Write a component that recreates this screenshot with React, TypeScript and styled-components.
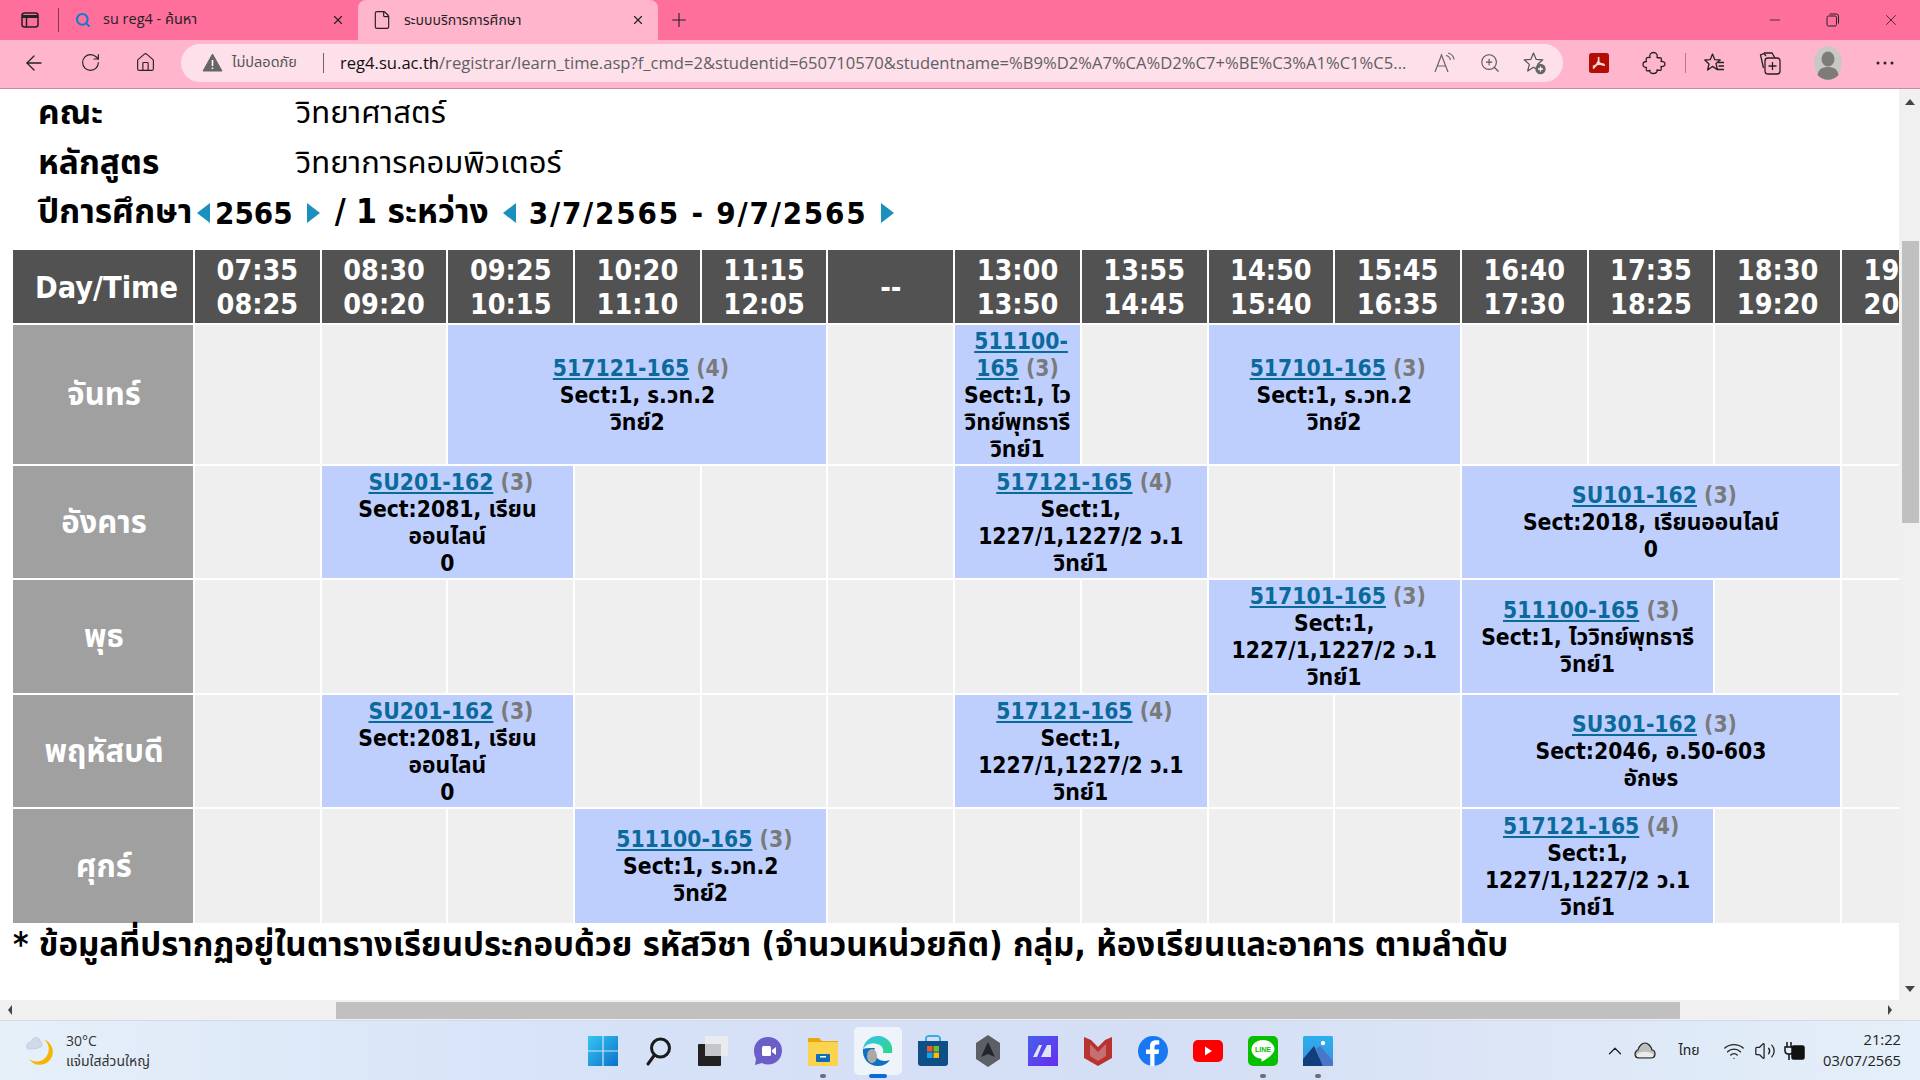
import React from "react";
import styled, { createGlobalStyle } from "styled-components";
import { ArrowLeft, RotateCw, Home, Search, X, Plus, File, Minus, ZoomIn, ChevronUp, Wifi, Volume2 } from "lucide-react";

const Global = createGlobalStyle`
  html, body { margin: 0; padding: 0; width: 1920px; height: 1080px; overflow: hidden; background: #fff; }
  * { box-sizing: border-box; }
`;
const PAGE_FONT = `"DejaVu Sans Condensed", "DejaVu Sans", "Noto Sans Thai", "Noto Sans", sans-serif`;
const UI_FONT = `"Open Sans", "Noto Sans", "Noto Sans Thai", sans-serif`;

const Win = styled.div`display:flex;flex-direction:column;width:1920px;height:1080px;overflow:hidden;`;
const TabStrip = styled.div`display:flex;align-items:flex-end;height:40px;background:#ff6f9c;color:#222;font-family:${UI_FONT};`;
const SideBtn = styled.div`display:flex;align-items:center;justify-content:center;width:59px;height:40px;position:relative;
  &::after{content:"";position:absolute;right:0;top:8px;height:24px;width:1px;background:#7d3a50;}`;
const Tab = styled.div<{ $active?: boolean }>`display:flex;align-items:center;height:40px;width:${p => (p.$active ? "300px" : "299px")};
  background:${p => (p.$active ? "#ffb6cc" : "transparent")};border-radius:${p => (p.$active ? "8px 8px 0 0" : "0")};padding:0 13px 0 ${p => (p.$active ? "14px" : "16px")};
  font-size:${p => (p.$active ? "14px" : "14.5px")};gap:12px;`;
const TabTitle = styled.span`flex:1;white-space:nowrap;overflow:hidden;`;
const NewTab = styled.div`display:flex;align-items:center;justify-content:center;width:42px;height:40px;`;
const Spacer = styled.div`flex:1;`;
const WinCtl = styled.div`display:flex;align-items:center;justify-content:center;width:58px;height:40px;`;

const Toolbar = styled.div`display:flex;align-items:center;height:49px;background:#ffb6cc;border-bottom:1px solid #c98aa0;padding:0 0 3px 0;`;
const NavBtn = styled.div<{ $w: number }>`display:flex;align-items:center;justify-content:center;width:${p => p.$w}px;height:38px;flex:none;`;
const AddressBar = styled.div`display:flex;align-items:center;width:1382px;height:38px;background:#fde0ea;border-radius:19px;font-family:${UI_FONT};flex:none;`;
const WarnWrap = styled.div`display:flex;margin-left:21px;width:30px;flex:none;`;
const Insecure = styled.span`font-size:14.5px;color:#555;width:76px;flex:none;white-space:nowrap;`;
const Sep = styled.div`width:1px;height:20px;background:#666;margin:0 16px 0 15px;flex:none;`;
const Url = styled.div`width:1082px;flex:none;font-size:16.6px;color:#5f5f5f;white-space:nowrap;overflow:hidden;
  b{font-weight:400;color:#111;}`;
const AddrIcons = styled.div`display:flex;align-items:center;`;
const AddrIcon = styled.div`width:45px;display:flex;justify-content:center;`;
const TbSep = styled.div`width:1px;height:20px;background:#b3788c;flex:none;margin-left:12px;`;

const PageRow = styled.div`display:flex;flex:1;min-height:0;`;
const Page = styled.div`width:1899px;overflow:hidden;background:#fff;color:#000;font-family:${PAGE_FONT};`;
const VScroll = styled.div`width:21px;background:#f0f0f0;display:flex;flex-direction:column;align-items:center;position:relative;`;
const VThumb = styled.div`width:17px;height:282px;background:#c0c0c0;margin-top:152px;margin-left:2px;`;
const Arrow = styled.div<{ $dir: "up" | "down" | "left" | "right" }>`width:0;height:0;position:absolute;
  ${p => p.$dir === "up" && "top:10px;left:6px;border:5px solid transparent;border-top:0;border-bottom:6px solid #444;"}
  ${p => p.$dir === "down" && "bottom:8px;left:6px;border:5px solid transparent;border-bottom:0;border-top:6px solid #444;"}
  ${p => p.$dir === "left" && "left:8px;top:5px;border:5px solid transparent;border-left:0;border-right:4px solid #444;"}
  ${p => p.$dir === "right" && "right:28px;top:5px;border:5px solid transparent;border-right:0;border-left:4px solid #444;"}
`;
const HScroll = styled.div`height:20px;background:#f0f0f0;position:relative;padding:2px 0 1px 336px;flex:none;`;
const HThumb = styled.div`width:1344px;height:17px;background:#c0c0c0;`;

const InfoRow = styled.div`display:flex;align-items:center;height:49.5px;padding-left:38px;white-space:nowrap;`;
const InfoLabel = styled.div`width:258px;font-weight:700;font-size:33.5px;`;
const InfoValue = styled.div`font-weight:400;font-size:31px;`;
const YearNum = styled.span`font-weight:700;font-size:31px;`;
const YearMid = styled.span`font-weight:700;font-size:33.5px;margin-left:10px;`;
const YearDates = styled.span`font-weight:700;font-size:31px;letter-spacing:1.8px;margin-left:8px;`;
const YearLabel = styled.span`font-weight:700;font-size:33.5px;width:159px;flex:none;`;
const Tri = styled.i<{ $dir: "l" | "r"; $ml: number }>`display:block;width:0;height:0;flex:none;margin-left:${p => p.$ml}px;margin-right:5px;
  border-top:10px solid transparent;border-bottom:10px solid transparent;
  ${p => (p.$dir === "l" ? "border-right:13px solid #1b90bf;" : "border-left:13px solid #1b90bf;")}`;

const Table = styled.table`margin:10px 0 0 11px;border-collapse:separate;border-spacing:2px;table-layout:fixed;width:1957.8px;`;
const HeadCell = styled.th`background:#525252;color:#fff;font-size:28.5px;font-weight:700;line-height:34px;height:73px;padding:3px 0 0;text-align:center;white-space:pre;`;
const DayHead = styled(HeadCell)`font-size:30.4px;padding-left:7px;`;
const DayCell = styled.td`background:#a0a0a0;color:#fff;font-size:31px;font-weight:700;text-align:center;padding:3px 0 0 2px;`;
const Empty = styled.td`background:#efefef;padding:0;`;
const Course = styled.td`background:#bfcffd;text-align:center;font-size:22.7px;font-weight:700;line-height:27px;padding:3px 0 1px;white-space:pre;`;
const CourseLink = styled.a`color:#0a6a9b;text-decoration:underline;`;
const Credit = styled.span`color:#7a7a7a;`;
const Note = styled.div`font-size:33px;font-weight:700;height:40px;line-height:40px;padding:0 0 0 13px;white-space:nowrap;`;

const Taskbar = styled.div`display:grid;grid-template-columns:1fr 770px 1fr;align-items:center;height:60px;flex:none;
  background:linear-gradient(90deg,#e6f0f9 0%,#d6e2f8 30%,#d4def5 60%,#e4eff9 100%);border-top:1px solid #d3dbe6;font-family:${UI_FONT};color:#222;`;
const Weather = styled.div`display:flex;align-items:center;padding-left:26px;gap:10px;`;
const WeatherText = styled.div`display:flex;flex-direction:column;font-size:14px;line-height:20px;color:#333;`;
const TaskIcons = styled.div`display:flex;`;
const TaskItem = styled.div<{ $active?: boolean }>`width:55px;height:58px;display:flex;align-items:center;justify-content:center;position:relative;
  &>div{width:48px;height:48px;border-radius:5px;display:flex;align-items:center;justify-content:center;background:${p => (p.$active ? "#eff4fb" : "transparent")};}`;
const RunDot = styled.span<{ $active?: boolean }>`position:absolute;bottom:2px;left:50%;transform:translateX(-50%);height:4px;border-radius:2px;
  width:${p => (p.$active ? "18px" : "6px")};background:${p => (p.$active ? "#0a6cd6" : "#6b7078")};`;
const Tray = styled.div`display:flex;align-items:center;justify-content:flex-end;padding-right:19px;`;
const TrayItem = styled.div<{ $w: number }>`width:${p => p.$w}px;display:flex;justify-content:center;font-size:14px;flex:none;`;
const Clock = styled.div`text-align:right;font-size:14.7px;line-height:21px;margin:-2px 0 0 13px;`;

type Cell = { span?: number; code?: string; cont?: string; cr?: number; text?: string };
const e = (n: number): Cell[] => Array.from({ length: n }, () => ({}));
const hours = ["07:35\n08:25","08:30\n09:20","09:25\n10:15","10:20\n11:10","11:15\n12:05","--","13:00\n13:50","13:55\n14:45","14:50\n15:40","15:45\n16:35","16:40\n17:30","17:35\n18:25","18:30\n19:20","19:25\n20:15"];
const rv = "Sect:1,\n1227/1,1227/2 ว.1\nวิทย์1";
const su201 = "Sect:2081, เรียน\nออนไลน์\n0";
const rows: { day: string; h: number; cells: Cell[] }[] = [
  { day: "จันทร์", h: 139, cells: [...e(2), { span: 3, code: "517121-165", cr: 4, text: "Sect:1, ร.วท.2\nวิทย์2" }, ...e(1), { code: "511100-", cont: "165", cr: 3, text: "Sect:1, ไว\nวิทย์พุทธารี\nวิทย์1" }, ...e(1), { span: 2, code: "517101-165", cr: 3, text: "Sect:1, ร.วท.2\nวิทย์2" }, ...e(4)] },
  { day: "อังคาร", h: 112, cells: [...e(1), { span: 2, code: "SU201-162", cr: 3, text: su201 }, ...e(3), { span: 2, code: "517121-165", cr: 4, text: rv }, ...e(2), { span: 3, code: "SU101-162", cr: 3, text: "Sect:2018, เรียนออนไลน์\n0" }, ...e(1)] },
  { day: "พุธ", h: 113, cells: [...e(8), { span: 2, code: "517101-165", cr: 3, text: rv }, { span: 2, code: "511100-165", cr: 3, text: "Sect:1, ไววิทย์พุทธารี\nวิทย์1" }, ...e(2)] },
  { day: "พฤหัสบดี", h: 112, cells: [...e(1), { span: 2, code: "SU201-162", cr: 3, text: su201 }, ...e(3), { span: 2, code: "517121-165", cr: 4, text: rv }, ...e(2), { span: 3, code: "SU301-162", cr: 3, text: "Sect:2046, อ.50-603\nอักษร" }, ...e(1)] },
  { day: "ศุกร์", h: 114, cells: [...e(3), { span: 2, code: "511100-165", cr: 3, text: "Sect:1, ร.วท.2\nวิทย์2" }, ...e(5), { span: 2, code: "517121-165", cr: 4, text: rv }, ...e(2)] },
];

const SidebarIcon = () => (<svg width="20" height="20" viewBox="0 0 20 20" fill="none" stroke="#222" strokeWidth="1.5"><rect x="2" y="3" width="16" height="14" rx="2.5"/><path d="M2 6.500h16" strokeWidth="3"/><path d="M6.500 6v11"/></svg>);
const RestoreIcon = () => (<svg width="14" height="14" viewBox="0 0 14 14" fill="none" stroke="#222" strokeWidth="1"><rect x="1" y="3" width="9.500" height="10" rx="1.500"/><path d="M3.500 1h7a2 2 0 0 1 2 2v7.500"/></svg>);
const Warn = () => (<svg width="21" height="19" viewBox="0 0 21 19"><path d="M10.500 1 20 18H1z" fill="#666" stroke="#666" strokeLinejoin="round"/><path d="M10.500 7v6M10.500 14.500v1.500" stroke="#fff" strokeWidth="1.600"/></svg>);
const ReadAloud = () => (<svg width="24" height="22" viewBox="0 0 24 22" fill="none" stroke="#666" strokeWidth="1.200"><path d="M2 20 8.500 3 15 20M4.500 14h8"/><path d="M13 3.500c2.500.5 4 2 4.500 4.500M15 1c3.500.8 5.500 3 6 6.500"/></svg>);
const FavAdd = () => (<svg width="24" height="24" viewBox="0 0 24 24"><path d="M10.500 2l2.600 6.300 6.700.5-5.100 4.400 1.600 6.500-5.800-3.500L4.700 20l1.600-6.600L1.200 8.800l6.700-.5z" fill="none" stroke="#555" strokeWidth="1.200" strokeLinejoin="round"/><circle cx="17.500" cy="18" r="5.200" fill="#666"/><path d="M17.500 15.500v5M15 18h5" stroke="#fff" strokeWidth="1.300"/></svg>);
const Pdf = () => (<svg width="20" height="20" viewBox="0 0 20 20"><rect width="20" height="20" rx="2.500" fill="#b10d02"/><path d="M9.500 4c.8 3-1 7.500-5.500 11.500M9.500 8.500c1 2 3 3.500 6.500 3.700M4 13.500c3.500-2 8-3 11-2.200" fill="none" stroke="#f6d8d4" strokeWidth="1.700"/></svg>);
const PuzzleIcon = () => (<svg width="24" height="24" viewBox="0 0 24 24" fill="none" stroke="#222" strokeWidth="1.300" strokeLinejoin="round"><path d="M8 6.500c-1-3 1-5 3.500-5s4.500 2 3.500 5c2 .5 3.500 0 4 .5s.5 2 0 3.500c2.500-.5 4 1 4 2.500s-1.500 3-4 2.500c.5 2 .5 3 0 3.500s-2 .5-4 0c.5 2-1 3.500-3.500 3.500S7.500 21.500 8 19.500c-2 .5-3 .5-3.500 0s-.5-1.500 0-3c-2.500 0-3.500-1.500-3.500-3s1-3 3.500-3c-.5-1.500-.5-3 0-3.500S6 6 8 6.500z"/></svg>);
const Favs = () => (<svg width="24" height="24" viewBox="0 0 24 24" fill="none" stroke="#222" strokeWidth="1.300" strokeLinejoin="round"><path d="M9.500 3l2.300 5.700 5.400.3-4.200 3.600 1.400 6-4.900-3.200L4.600 19l1.400-6-4.200-4 5.400-.3z"/><path d="M15 11.500h6M15.500 15h5.500M14.500 18.500h6.500"/></svg>);
const Collections = () => (<svg width="24" height="26" viewBox="0 0 24 26" fill="none" stroke="#222" strokeWidth="1.300"><path d="M8 6 6 3.500 2.500 5l3 13"/><rect x="7" y="8" width="15" height="16" rx="3"/><path d="M14.500 12v8M10.500 16h8M6 3h8l3 5"/></svg>);
const Avatar = () => (<svg width="28" height="34" viewBox="0 0 28 34"><ellipse cx="14" cy="17" rx="14" ry="17" fill="#c9c8c4"/><ellipse cx="14" cy="13" rx="6.500" ry="7.500" fill="#7d7c79"/><path d="M3.500 29c1-6 5-8 10.500-8s9.500 2 10.500 8a14 14 0 0 1-21 0z" fill="#7d7c79"/></svg>);
const More = () => (<svg width="18" height="4" viewBox="0 0 18 4" fill="#222"><circle cx="2" cy="2" r="1.500"/><circle cx="9" cy="2" r="1.500"/><circle cx="16" cy="2" r="1.500"/></svg>);

const Moon = () => (<svg width="30" height="30" viewBox="0 0 30 30"><path d="M18 3.500A13 13 0 1 1 3 23 A 12 12 0 0 0 18 3.500z" fill="#f8b500"/><path d="M3 13c-2 0-3-2-2-4 0-2 2-3 4-2.500C6 3 8 1.500 10 1.500c2.500 0 4 2 4.500 4.500 1.500.5 2 2 1.500 4-1 2-8 3-13 3z" fill="#cfd9e8" stroke="#b4c1d6" strokeWidth=".6"/></svg>);
const WinLogo = () => (<svg width="30" height="30" viewBox="0 0 30 30"><defs><linearGradient id="wl" x1="0" y1="0" x2="1" y2="1"><stop offset="0" stopColor="#35c6f4"/><stop offset="1" stopColor="#0a72c8"/></linearGradient></defs><path d="M0 0h14.400v14.400H0zM15.600 0H30v14.400H15.600zM0 15.600h14.400V30H0zM15.600 15.600H30V30H15.600z" fill="url(#wl)"/></svg>);
const SearchTb = () => (<svg width="30" height="30" viewBox="0 0 30 30" fill="none" stroke="#1b1b1b" strokeWidth="3"><circle cx="17.500" cy="12" r="9"/><path d="M11.500 19 5 28" strokeLinecap="round"/></svg>);
const TaskView = () => (<svg width="30" height="30" viewBox="0 0 30 30"><rect x="7" y="0" width="23" height="20" rx="1" fill="#e9ebee" /><rect x="0" y="8" width="23" height="22" rx="1" fill="#222"/><rect x="7" y="8" width="16" height="12" fill="#c4c6ca"/></svg>);
const Chat = () => (<svg width="30" height="30" viewBox="0 0 30 30"><path d="M15 1C7 1 1 7 1 15c0 3 1 6 2 8l-1 6 7-2c2 1 4 1.500 6 1.500 8 0 14-6 14-14S23 1 15 1z" fill="#6b5fc7"/><rect x="9" y="10" width="9" height="10" rx="1.500" fill="#fff"/><path d="M19 14l4-3v8l-4-3z" fill="#fff"/></svg>);
const Explorer = () => (<svg width="30" height="30" viewBox="0 0 30 30"><path d="M0 2h11l3 3h16v25H0z" fill="#e9a90e"/><rect y="6" width="30" height="24" fill="#fcd34f"/><rect x="8" y="18" width="14" height="8" rx="1" fill="#0f6cbd"/><rect x="12" y="20" width="6" height="1.500" fill="#fff"/></svg>);
const Edge = () => (<svg width="32" height="32" viewBox="0 0 32 32"><defs><linearGradient id="eg" x1="0" y1="0" x2="1" y2="1"><stop offset="0" stopColor="#35c1f1"/><stop offset="1" stopColor="#2bd97f"/></linearGradient></defs><path d="M16 1C8 1 2 7 1 14c3-5 9-7 14-5 5 1 7 5 6 9h9c2-9-5-17-14-17z" fill="url(#eg)"/><path d="M1 14c-1 9 5 17 15 17 5 0 9-2 12-6-5 2-10 1-13-2-4-3-4-7-2-10-5 0-10 0-12 1z" fill="#1170c2"/><ellipse cx="10" cy="21" rx="5" ry="7" fill="#a9a9a5"/></svg>);
const Store = () => (<svg width="30" height="32" viewBox="0 0 30 32"><path d="M8 8V3a3 3 0 0 1 3-2h8a3 3 0 0 1 3 2v5" fill="none" stroke="#35aee6" strokeWidth="2"/><path d="M0 6h30v22a3 3 0 0 1-3 3H3a3 3 0 0 1-3-3z" fill="#0e4f88"/><rect x="9" y="11" width="5.500" height="5.500" fill="#f05a28"/><rect x="15.500" y="11" width="5.500" height="5.500" fill="#7cb92c"/><rect x="9" y="17.500" width="5.500" height="5.500" fill="#15a4e6"/><rect x="15.500" y="17.500" width="5.500" height="5.500" fill="#fbbc09"/></svg>);
const Hex = () => (<svg width="28" height="32" viewBox="0 0 28 32"><path d="M14 0l12 8v16l-12 8L2 24V8z" fill="#5c5f63"/><path d="M14 7 7 22l7-3 7 3z" fill="#23262a"/></svg>);
const MA = () => (<svg width="30" height="30" viewBox="0 0 30 30"><defs><linearGradient id="ma" x1="0" y1="0" x2="1" y2="1"><stop offset="0" stopColor="#4560ea"/><stop offset="1" stopColor="#6a2bf0"/></linearGradient></defs><rect width="30" height="30" fill="url(#ma)"/><path d="M5 21 11 9h3l-5 12zM13 21l6-12h4v12h-3" fill="#dfe6fb"/></svg>);
const Shield = () => (<svg width="28" height="30" viewBox="0 0 28 30"><path d="M0 1l7 3 7 7 7-7 7-3v21l-14 8L0 22z" fill="#b9322e"/><path d="M6 8v12l8 5 8-5V8l-8 8z" fill="#d9e1ee" opacity=".35"/></svg>);
const Fb = () => (<svg width="30" height="30" viewBox="0 0 30 30"><circle cx="15" cy="15" r="15" fill="#1778f2"/><path d="M16.500 30V18h4l.7-4.500h-4.700V11c0-1.500.7-2.500 2.500-2.500h2.300V4.500c-1-.2-2.300-.3-3.500-.3-3.500 0-5.800 2-5.800 6v3.300H8V18h4.200v12z" fill="#fff"/></svg>);
const Yt = () => (<svg width="30" height="22" viewBox="0 0 30 22"><rect width="30" height="22" rx="5" fill="#f00"/><path d="M12 6.500v9l7-4.500z" fill="#fff"/></svg>);
const Line = () => (<svg width="30" height="30" viewBox="0 0 30 30"><rect width="30" height="30" rx="5" fill="#06c000"/><path d="M15 4C8.500 4 3.500 8.300 3.500 13.500c0 4.700 4 8.500 9.500 9.300.5.100.8.500.6 1.200l-.3 1.800c3-1 9-5 11.500-8.500 1-1.300 1.700-2.700 1.700-4.300C26.500 8.300 21.500 4 15 4z" fill="#fff"/><text x="15" y="16" textAnchor="middle" fontSize="7" fontWeight="700" fill="#06c000" fontFamily="Liberation Sans">LINE</text></svg>);
const Photos = () => (<svg width="30" height="30" viewBox="0 0 30 30"><defs><linearGradient id="ph" x1="0" y1="0" x2="0" y2="1"><stop offset="0" stopColor="#2ab0ee"/><stop offset="1" stopColor="#3f8fd8"/></linearGradient></defs><rect width="30" height="30" rx="1.500" fill="url(#ph)"/><circle cx="20" cy="7" r="2.200" fill="#fff"/><path d="M0 23 11 10l9 20H0z" fill="#123f7c"/><path d="M13 13l4-3 13 15v5H20z" fill="#4a76c9"/></svg>);
const Cloud = () => (<svg width="22" height="20" viewBox="0 0 22 20"><path d="M5 17c-3 0-4-2-4-4s2-4 3-4c1-4 4-7 7-7s6 3 7 7c2 0 3 2 3 4s-1 4-4 4z" fill="#bfbfbd" stroke="#222" strokeWidth="1.200"/><path d="M3 13c4-3 12-3 16 0v3H3z" fill="#ececea"/></svg>);
const Batt = () => (<svg width="22" height="22" viewBox="0 0 22 22" fill="none" stroke="#111" strokeWidth="1.500"><rect x="8" y="6" width="12" height="13" rx="1.500" fill="#111"/><path d="M3 2v5M7 2v5M1 7h8v4a3 3 0 0 1-3 3H4a3 3 0 0 1-3-3zM5 14v6"/></svg>);

const taskIcons: { n: React.ReactNode; dot?: boolean; active?: boolean }[] = [
  { n: <WinLogo /> }, { n: <SearchTb /> }, { n: <TaskView /> }, { n: <Chat /> }, { n: <Explorer />, dot: true },
  { n: <Edge />, active: true }, { n: <Store /> }, { n: <Hex /> }, { n: <MA /> }, { n: <Shield /> }, { n: <Fb /> },
  { n: <Yt /> }, { n: <Line />, dot: true }, { n: <Photos />, dot: true },
];

const URL_HOST = "reg4.su.ac.th";
const URL_REST = "/registrar/learn_time.asp?f_cmd=2&studentid=650710570&studentname=%B9%D2%A7%CA%D2%C7+%BE%C3%A1%C1%C5...";

export default function App() {
  return (
    <Win>
      <Global />
      <TabStrip>
        <SideBtn><SidebarIcon /></SideBtn>
        <Tab>
          <Search size={16} color="#0f7bd6" strokeWidth={3} />
          <TabTitle>su reg4 - ค้นหา</TabTitle>
          <X size={14} />
        </Tab>
        <Tab $active>
          <File size={20} strokeWidth={1.4} />
          <TabTitle>ระบบบริการการศึกษา</TabTitle>
          <X size={14} />
        </Tab>
        <NewTab><Plus size={22} strokeWidth={1.2} /></NewTab>
        <Spacer />
        <WinCtl><Minus size={16} strokeWidth={1.2} /></WinCtl>
        <WinCtl><RestoreIcon /></WinCtl>
        <WinCtl><X size={18} strokeWidth={1.1} /></WinCtl>
      </TabStrip>
      <Toolbar>
        <NavBtn $w={68}><ArrowLeft size={24} strokeWidth={1.3} color="#222" /></NavBtn>
        <NavBtn $w={44}><RotateCw size={21} strokeWidth={1.3} color="#222" /></NavBtn>
        <NavBtn $w={66}><Home size={21} strokeWidth={1.3} color="#222" /></NavBtn>
        <NavBtn $w={3} />
        <AddressBar>
          <WarnWrap><Warn /></WarnWrap>
          <Insecure>ไม่ปลอดภัย</Insecure>
          <Sep />
          <Url><b>{URL_HOST}</b>{URL_REST}</Url>
          <AddrIcons>
            <AddrIcon><ReadAloud /></AddrIcon>
            <AddrIcon><ZoomIn size={22} strokeWidth={1.2} color="#555" /></AddrIcon>
            <AddrIcon><FavAdd /></AddrIcon>
          </AddrIcons>
        </AddressBar>
        <NavBtn $w={72}><Pdf /></NavBtn>
        <NavBtn $w={38}><PuzzleIcon /></NavBtn>
        <TbSep />
        <NavBtn $w={58}><Favs /></NavBtn>
        <NavBtn $w={52}><Collections /></NavBtn>
        <NavBtn $w={64}><Avatar /></NavBtn>
        <NavBtn $w={50}><More /></NavBtn>
      </Toolbar>
      <PageRow>
        <Page>
          <InfoRow><InfoLabel>คณะ</InfoLabel><InfoValue>วิทยาศาสตร์</InfoValue></InfoRow>
          <InfoRow><InfoLabel>หลักสูตร</InfoLabel><InfoValue>วิทยาการคอมพิวเตอร์</InfoValue></InfoRow>
          <InfoRow>
            <YearLabel>ปีการศึกษา</YearLabel>
            <Tri $dir="l" $ml={0} />
            <YearNum>2565</YearNum>
            <Tri $dir="r" $ml={14} />
            <YearMid>/ 1 ระหว่าง</YearMid>
            <Tri $dir="l" $ml={14} />
            <YearDates>3/7/2565 - 9/7/2565</YearDates>
            <Tri $dir="r" $ml={14} />
          </InfoRow>
          <Table>
            <colgroup>
              <col style={{ width: 180 }} />
              {hours.map(h => <col key={h} style={{ width: 124.7 }} />)}
            </colgroup>
            <thead>
              <tr>
                <DayHead>Day/Time</DayHead>
                {hours.map(h => <HeadCell key={h}>{h}</HeadCell>)}
              </tr>
            </thead>
            <tbody>
              {rows.map(r => (
                <tr key={r.day} style={{ height: r.h }}>
                  <DayCell>{r.day}</DayCell>
                  {r.cells.map((c, i) => c.code ? (
                    <Course key={i} colSpan={c.span ?? 1}>
                      {"\u00a0"}<CourseLink href="#">{c.code}</CourseLink>
                      {c.cont ? <>{"\n"}<CourseLink href="#">{c.cont}</CourseLink></> : null}{" "}
                      <Credit>({c.cr})</Credit>{"\n"}{c.text}
                    </Course>
                  ) : <Empty key={i} />)}
                </tr>
              ))}
            </tbody>
          </Table>
          <Note>* ข้อมูลที่ปรากฏอยู่ในตารางเรียนประกอบด้วย รหัสวิชา (จำนวนหน่วยกิต) กลุ่ม, ห้องเรียนและอาคาร ตามลำดับ</Note>
        </Page>
        <VScroll>
          <Arrow $dir="up" />
          <VThumb />
          <Arrow $dir="down" />
        </VScroll>
      </PageRow>
      <HScroll>
        <Arrow $dir="left" />
        <HThumb />
        <Arrow $dir="right" />
      </HScroll>
      <Taskbar>
        <Weather>
          <Moon />
          <WeatherText><span>30°C</span><span>แจ่มใสส่วนใหญ่</span></WeatherText>
        </Weather>
        <TaskIcons>
          {taskIcons.map((t, i) => (
            <TaskItem key={i} $active={t.active}>
              <div>{t.n}</div>
              {(t.dot || t.active) && <RunDot $active={t.active} />}
            </TaskItem>
          ))}
        </TaskIcons>
        <Tray>
          <TrayItem $w={30}><ChevronUp size={22} strokeWidth={1.4} /></TrayItem>
          <TrayItem $w={30}><Cloud /></TrayItem>
          <TrayItem $w={58}>ไทย</TrayItem>
          <TrayItem $w={32}><Wifi size={22} strokeWidth={1.5} /></TrayItem>
          <TrayItem $w={30}><Volume2 size={22} strokeWidth={1.4} /></TrayItem>
          <TrayItem $w={30}><Batt /></TrayItem>
          <Clock><div>21:22</div><div>03/07/2565</div></Clock>
        </Tray>
      </Taskbar>
    </Win>
  );
}
